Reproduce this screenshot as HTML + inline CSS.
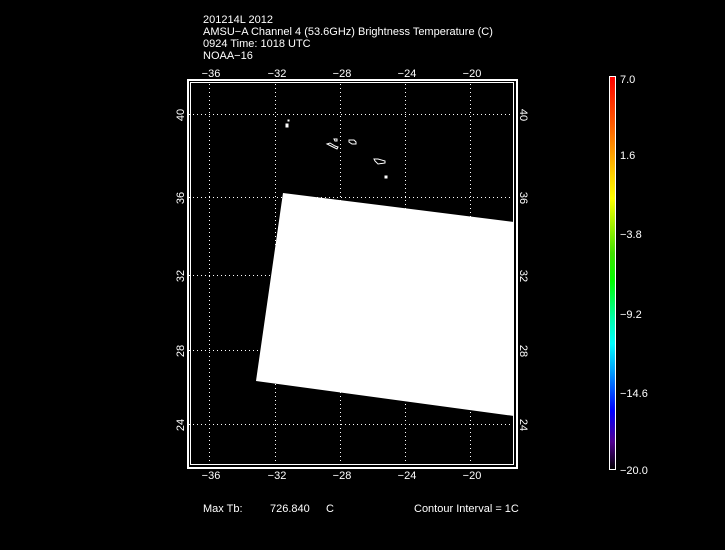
<!DOCTYPE html>
<html><head><style>
html,body{margin:0;padding:0;background:#000;}
svg{display:block}
text{font-family:"Liberation Sans",sans-serif;fill:#fff;font-size:11px}
</style></head><body>
<svg width="725" height="550" viewBox="0 0 725 550">
<rect width="725" height="550" fill="#000"/>
<text x="203" y="23">201214L 2012</text>
<text x="203" y="35">AMSU−A Channel 4 (53.6GHz) Brightness Temperature (C)</text>
<text x="203" y="47">0924 Time: 1018 UTC</text>
<text x="203" y="59">NOAA−16</text>
<g fill="none" stroke="#fff" stroke-width="1" stroke-dasharray="1 3">
<line x1="209.5" y1="80" x2="209.5" y2="466"/>
<line x1="275.5" y1="80" x2="275.5" y2="466"/>
<line x1="340.5" y1="80" x2="340.5" y2="466"/>
<line x1="405.5" y1="80" x2="405.5" y2="466"/>
<line x1="470.5" y1="80" x2="470.5" y2="466"/>
<line x1="189" y1="114.5" x2="515" y2="114.5"/>
<line x1="189" y1="197.5" x2="515" y2="197.5"/>
<line x1="189" y1="275.5" x2="515" y2="275.5"/>
<line x1="189" y1="350.5" x2="515" y2="350.5"/>
<line x1="189" y1="424.5" x2="515" y2="424.5"/>
</g>
<polygon points="283,193 514,222 514,416 256,381" fill="#fff"/>
<g fill="none" stroke="#fff" stroke-width="1">
<rect x="286" y="124" width="2" height="3" fill="#fff"/>
<rect x="288" y="120" width="1" height="1" fill="#fff"/>
<path d="M327,144 l3,-1 l5,3 l3,1 l-1,2 l-4,-2 z"/>
<path d="M334,139 l3,0 l0,2 l-2,0 z"/>
<path d="M349,140 l5,0 l2,2 l0,2 l-4,0 l-3,-2 z"/>
<path d="M374,159 l4,0 l7,2 l0,2 l-7,1 l-3,-3 z"/>
<rect x="385" y="176" width="2" height="2" fill="#fff"/>
</g>
<g fill="#fff">
<rect x="187" y="79" width="331" height="2"/>
<rect x="187" y="79" width="2" height="390"/>
<rect x="516" y="79" width="2" height="390"/>
<rect x="187" y="467" width="331" height="2"/>
</g>
<rect x="190.5" y="82.5" width="323" height="382" fill="none" stroke="#fff" stroke-width="1"/>
<g text-anchor="middle">
<text x="211" y="77">−36</text><text x="277" y="77">−32</text><text x="342" y="77">−28</text><text x="407" y="77">−24</text><text x="472" y="77">−20</text>
<text x="211" y="479">−36</text><text x="277" y="479">−32</text><text x="342" y="479">−28</text><text x="407" y="479">−24</text><text x="472" y="479">−20</text>
<text transform="translate(184,115) rotate(-90)">40</text>
<text transform="translate(184,198) rotate(-90)">36</text>
<text transform="translate(184,276) rotate(-90)">32</text>
<text transform="translate(184,351) rotate(-90)">28</text>
<text transform="translate(184,425) rotate(-90)">24</text>
<text transform="translate(520,115) rotate(90)">40</text>
<text transform="translate(520,198) rotate(90)">36</text>
<text transform="translate(520,276) rotate(90)">32</text>
<text transform="translate(520,351) rotate(90)">28</text>
<text transform="translate(520,425) rotate(90)">24</text>
</g>
<defs><linearGradient id="cb" x1="0" y1="0" x2="0" y2="1">
<stop offset="0" stop-color="#ff0000"/>
<stop offset="0.12" stop-color="#ff5a00"/>
<stop offset="0.25" stop-color="#ffd000"/>
<stop offset="0.31" stop-color="#ffff00"/>
<stop offset="0.45" stop-color="#40e000"/>
<stop offset="0.52" stop-color="#00ff00"/>
<stop offset="0.62" stop-color="#00ffb0"/>
<stop offset="0.68" stop-color="#00ffff"/>
<stop offset="0.75" stop-color="#00a0ff"/>
<stop offset="0.85" stop-color="#0000ff"/>
<stop offset="0.93" stop-color="#500090"/>
<stop offset="1" stop-color="#000000"/>
</linearGradient></defs>
<rect x="609.5" y="76.5" width="6" height="393" fill="url(#cb)" stroke="#fff" stroke-width="1"/>
<text x="620" y="83">7.0</text>
<text x="620" y="159">1.6</text>
<text x="620" y="238">−3.8</text>
<text x="620" y="318">−9.2</text>
<text x="620" y="397">−14.6</text>
<text x="620" y="474">−20.0</text>
<text x="203" y="512">Max Tb:</text>
<text x="270" y="512">726.840</text>
<text x="326" y="512">C</text>
<text x="414" y="512">Contour Interval = 1C</text>
</svg>
</body></html>
